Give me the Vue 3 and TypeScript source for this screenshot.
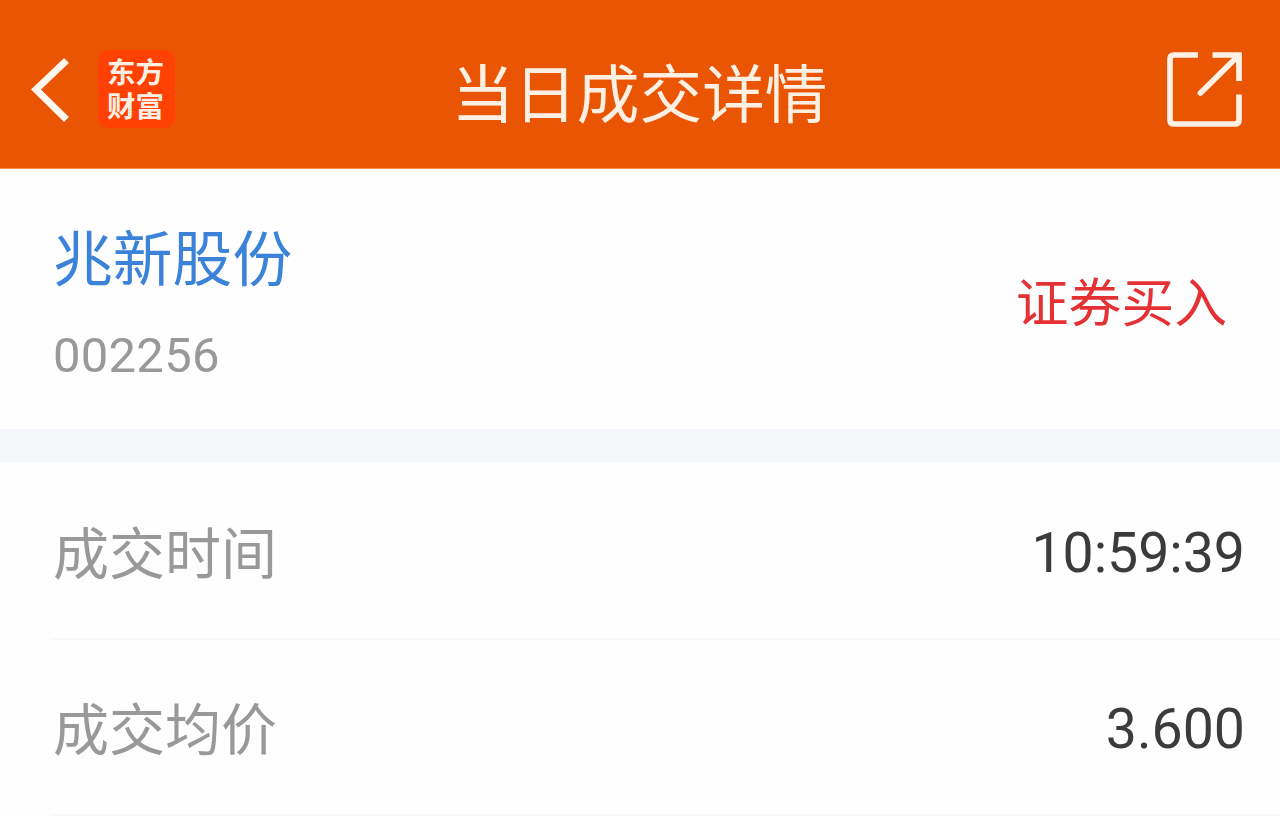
<script setup lang="ts">
interface Stock {
  name: string
  code: string
  action: string
}

interface DetailRow {
  label: string
  value: string
}

const title = '当日成交详情'
const logoText = '东方\n财富'
const stock: Stock = { name: '兆新股份', code: '002256', action: '证券买入' }
const rows: DetailRow[] = [
  { label: '成交时间', value: '10:59:39' },
  { label: '成交均价', value: '3.600' },
]
</script>

<template>
  <div class="screen">
    <header class="bar">
      <div class="side">
        <svg class="back" width="44" height="72" viewBox="0 0 44 72" fill="none">
          <path d="M38.5 7.5 L8 36.5 L38.5 66.5" stroke="#fff6ee" stroke-width="7" />
        </svg>
        <div class="logo">{{ logoText }}</div>
      </div>
      <h1 class="title">{{ title }}</h1>
      <div class="side end">
        <svg class="share" width="80" height="80" viewBox="0 0 80 80" fill="none" stroke="#fff1e5" stroke-width="5.7">
          <path d="M33 5 H9 Q5 5 5 9 V70 Q5 74 9 74 H70 Q74 74 74 70 V44.5" />
          <path d="M47.5 5 H74 V31" />
          <path d="M72 7 L35.5 43" stroke-linecap="round" />
        </svg>
      </div>
    </header>

    <section class="stock">
      <div class="identity">
        <span class="name">{{ stock.name }}</span>
        <span class="code">{{ stock.code }}</span>
      </div>
      <span class="action">{{ stock.action }}</span>
    </section>

    <div class="gap"></div>

    <main class="details">
      <div v-for="row in rows" :key="row.label" class="row">
        <span class="label">{{ row.label }}</span>
        <span class="value">{{ row.value }}</span>
      </div>
    </main>
  </div>
</template>

<style>
html,
body {
  margin: 0;
  overflow: hidden;
  background: #fefefe;
}
</style>

<style scoped>
.screen {
  width: 1280px;
  height: 816px;
  overflow: hidden;
  background: #fefefe;
  font-family: "Noto Sans CJK SC", sans-serif;
  font-weight: 400;
}

.bar {
  display: grid;
  grid-template-columns: 1fr auto 1fr;
  align-items: start;
  box-sizing: border-box;
  height: 169px;
  padding: 46px 35px 0 28px;
  background: #ea5504;
  border-bottom: 1px solid #f08a50;
}

.side {
  display: flex;
  padding-top: 4px;
}

.end {
  justify-content: flex-end;
}

.back {
  margin: 3px 26px 0 0;
}

.logo {
  box-sizing: border-box;
  width: 77px;
  height: 78px;
  padding: 4px 2px 0 0;
  border-radius: 10px;
  background: #ff4203;
  color: #fff0e6;
  font-size: 28.5px;
  font-weight: 700;
  line-height: 34px;
  text-align: center;
  white-space: pre-line;
}

.title {
  margin: 0;
  padding-left: 6px;
  color: #fff0e3;
  font-size: 62.7px;
  font-weight: 400;
  line-height: 88px;
}

.stock {
  display: flex;
  justify-content: space-between;
  align-items: center;
  box-sizing: border-box;
  height: 260px;
  padding: 0 53px;
}

.identity {
  display: flex;
  flex-direction: column;
  padding-top: 3px;
}

.name {
  color: #3b82d9;
  font-size: 59.8px;
  line-height: 86px;
}

.code {
  margin-top: 24px;
  color: #999;
  font-family: Roboto, sans-serif;
  font-size: 49px;
  letter-spacing: 0.25px;
  line-height: 68px;
}

.action {
  margin-bottom: 1px;
  color: #e33134;
  font-size: 52.8px;
  line-height: 80px;
}

.gap {
  height: 33px;
  background: #f5f7fa;
}

.details {
  padding-top: 2px;
}

.row {
  display: flex;
  justify-content: space-between;
  align-items: center;
  box-sizing: border-box;
  height: 176px;
  padding: 0 35px 0 53px;
  background: linear-gradient(#f8f8f8, #f8f8f8) 50px 100% / 100% 2px no-repeat;
}

.label {
  padding-bottom: 4px;
  color: #999;
  font-size: 56px;
  line-height: 84px;
}

.value {
  padding-top: 4px;
  color: #3b3b3b;
  font-family: Roboto, sans-serif;
  font-size: 55.4px;
  line-height: 84px;
}
</style>
